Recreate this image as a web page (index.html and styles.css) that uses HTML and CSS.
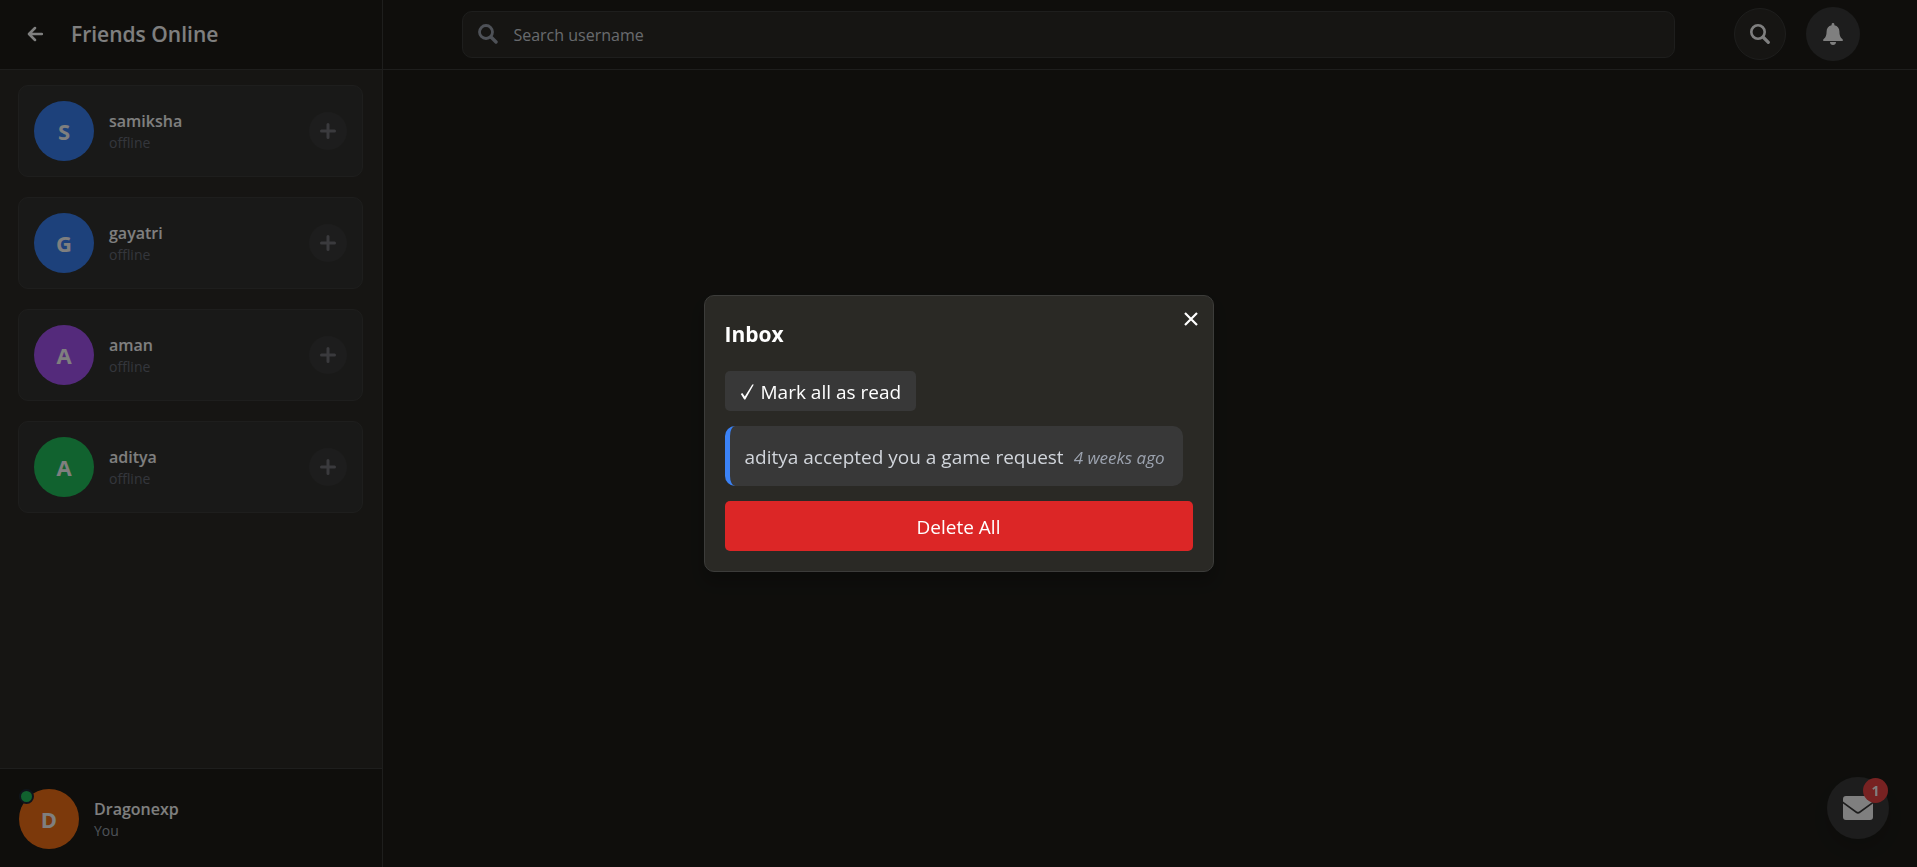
FILE: index.html
```html
<!DOCTYPE html>
<html lang="en">
<head>
<meta charset="utf-8">
<meta name="viewport" content="width=device-width, initial-scale=1">
<title>Friends Online</title>
<link rel="stylesheet" href="styles.css">
</head>
<body>
<div class="app">
  <aside class="sidebar">
    <header class="sidebar-head">
      <button class="back" type="button" aria-label="Back">
        <svg viewBox="0 0 16 16" width="16" height="16"><path d="M8 2 2 8l6 6M2.400 8H15" fill="none" stroke="currentColor" stroke-width="2.500" stroke-linecap="round" stroke-linejoin="round"/></svg>
      </button>
      <h1 class="title">Friends Online</h1>
    </header>
    <ul class="friends">
      <li class="card">
        <span class="avatar blue">S</span>
        <div class="who"><span class="name">samiksha</span><span class="status">offline</span></div>
        <button class="add" type="button" aria-label="Add samiksha"><svg viewBox="0 0 16 16" width="16" height="16"><path d="M8 1.500v13M1.500 8h13" stroke="currentColor" stroke-width="3" stroke-linecap="round"/></svg></button>
      </li>
      <li class="card">
        <span class="avatar blue">G</span>
        <div class="who"><span class="name">gayatri</span><span class="status">offline</span></div>
        <button class="add" type="button" aria-label="Add gayatri"><svg viewBox="0 0 16 16" width="16" height="16"><path d="M8 1.500v13M1.500 8h13" stroke="currentColor" stroke-width="3" stroke-linecap="round"/></svg></button>
      </li>
      <li class="card">
        <span class="avatar purple">A</span>
        <div class="who"><span class="name">aman</span><span class="status">offline</span></div>
        <button class="add" type="button" aria-label="Add aman"><svg viewBox="0 0 16 16" width="16" height="16"><path d="M8 1.500v13M1.500 8h13" stroke="currentColor" stroke-width="3" stroke-linecap="round"/></svg></button>
      </li>
      <li class="card">
        <span class="avatar green">A</span>
        <div class="who"><span class="name">aditya</span><span class="status">offline</span></div>
        <button class="add" type="button" aria-label="Add aditya"><svg viewBox="0 0 16 16" width="16" height="16"><path d="M8 1.500v13M1.500 8h13" stroke="currentColor" stroke-width="3" stroke-linecap="round"/></svg></button>
      </li>
    </ul>
    <footer class="me">
      <span class="avatar orange">D<i class="dot"></i></span>
      <div class="who"><span class="name">Dragonexp</span><span class="status you">You</span></div>
    </footer>
  </aside>
  <main class="main">
    <header class="topbar">
      <label class="search">
        <svg viewBox="0 0 20 20" width="20" height="20"><circle cx="8" cy="8" r="6.500" fill="none" stroke="currentColor" stroke-width="2.800"/><path d="m13 13 5 5" stroke="currentColor" stroke-width="3.400" stroke-linecap="round"/></svg>
        <input type="text" placeholder="Search username" aria-label="Search username">
      </label>
      <div class="actions">
        <button class="round outlined" type="button" aria-label="Search">
          <svg viewBox="0 0 20 20" width="20" height="20"><circle cx="8" cy="8" r="6.700" fill="none" stroke="currentColor" stroke-width="2.600"/><path d="m13.500 13.500 4.800 4.800" stroke="currentColor" stroke-width="3.200" stroke-linecap="round"/></svg>
        </button>
        <button class="round bell" type="button" aria-label="Notifications">
          <svg viewBox="0 0 20 22" width="20" height="22"><path d="M10 0a1.400 1.400 0 0 1 1.400 1.400v.8c3.200.7 5 3 5 6.200 0 4 .8 5.700 2.900 7.600.5.500.7.900.7 1.300 0 .500-.4.700-1 .7H1c-.6 0-1-.2-1-.7 0-.4.200-.8.700-1.300 2.100-1.900 2.900-3.600 2.900-7.600 0-3.200 1.800-5.500 5-6.200v-.8A1.400 1.400 0 0 1 10 0ZM7 19h6c0 1.800-1.300 3-3 3s-3-1.200-3-3Z" fill="currentColor"/></svg>
        </button>
      </div>
    </header>
    <button class="mail" type="button" aria-label="Inbox, 1 unread">
      <svg viewBox="0 0 30 24" width="30" height="24"><path d="M3 0h24a3 3 0 0 1 3 3v2.500L16.500 15.200a2.600 2.600 0 0 1-3 0L0 5.500V3a3 3 0 0 1 3-3ZM0 7.600l12.600 9.200a4 4 0 0 0 4.800 0L30 7.600v13.400a3 3 0 0 1-3 3H3a3 3 0 0 1-3-3Z" fill="currentColor"/></svg>
      <span class="badge">1</span>
    </button>
  </main>
</div>
<div class="overlay">
  <section class="modal" role="dialog" aria-modal="true" aria-labelledby="inbox-title">
    <button class="close" type="button" aria-label="Close"><svg viewBox="0 0 14 14" width="14" height="14"><path d="m1 1 12 12M13 1 1 13" stroke="currentColor" stroke-width="2.200"/></svg></button>
    <h2 class="modal-title" id="inbox-title">Inbox</h2>
    <button class="mark" type="button"><svg viewBox="0 0 14 16" width="14" height="16"><path d="m.8 10 1.500-.9 2.500 3.500L12.300.5h1.500L5.300 15.500H4.200Z" fill="currentColor"/></svg>Mark all as read</button>
    <ul class="messages">
      <li class="message"><span>aditya accepted you a game request</span><time class="ago">4 weeks ago</time></li>
    </ul>
    <button class="delete" type="button">Delete All</button>
  </section>
</div>
</body>
</html>
```
FILE: styles.css
```css
* { box-sizing: border-box; }
body {
  margin: 0;
  background: #1e1d19;
  color: #fff;
  font-family: "Segoe UI", "Open Sans", "Noto Sans", sans-serif;
  font-size: 19px;
}
button { border: 0; padding: 0; color: inherit; font: inherit; cursor: pointer; }
ul { list-style: none; margin: 0; padding: 0; }
svg { display: block; flex: none; }

.app { display: flex; min-height: 100vh; }
.sidebar {
  display: flex;
  flex-direction: column;
  flex: none;
  width: 20%;
  background: #2c2a26;
  border-right: 1px solid #3c3c3a;
}
.sidebar-head {
  display: flex;
  align-items: center;
  gap: 28px;
  height: 70px;
  padding: 0 27px 1px;
  background: #1e1d19;
  border-bottom: 1px solid #3c3c3a;
}
.back { background: none; }
.title { margin: 0; font-size: 21px; font-weight: 600; }
.friends {
  display: flex;
  flex-direction: column;
  flex: 1;
  gap: 20px;
  padding: 15px 19px 15px 18px;
}
.card {
  display: flex;
  align-items: center;
  gap: 15px;
  padding: 15px;
  background: #333330;
  border: 1px solid #3c3c3a;
  border-radius: 10px;
}
.avatar {
  position: relative;
  display: grid;
  place-items: center;
  flex: none;
  width: 60px;
  height: 60px;
  border-radius: 50%;
  font-size: 22px;
  line-height: 30px;
  font-weight: 700;
}
.blue { background: #3b82f6; }
.purple { background: #a855f7; }
.green { background: #22c55e; }
.orange { background: #f97316; }
.who { display: flex; flex-direction: column; flex: 1; }
.name { font-size: 16px; line-height: 24px; font-weight: 600; }
.status { font-size: 14px; line-height: 20px; color: #686d79; }
.you { color: #9ca3af; }
.add {
  display: grid;
  place-items: center;
  width: 38px;
  height: 38px;
  border-radius: 50%;
  background: #3a3a3a;
  color: #74747a;
}
.me {
  display: flex;
  align-items: center;
  gap: 15px;
  padding: 20px 19px 18px;
  background: #1e1d19;
  border-top: 1px solid #3c3c3a;
}
.dot {
  position: absolute;
  top: 0;
  left: 0;
  width: 15px;
  height: 15px;
  border: 2px solid #1f2937;
  border-radius: 50%;
  background: #22c55e;
}

.main { flex: 1; }
.topbar {
  display: flex;
  align-items: center;
  gap: 59px;
  height: 70px;
  padding: 0 57px 1px 79px;
  border-bottom: 1px solid #3c3c3a;
}
.search {
  display: flex;
  align-items: center;
  flex: 1;
  gap: 15px;
  height: 47px;
  padding: 0 15px;
  background: #2c2a26;
  border: 1px solid #3c3c3a;
  border-radius: 10px;
  color: #9ca3af;
}
.search input {
  flex: 1;
  border: 0;
  padding: 2px 0 0;
  outline: 0;
  background: none;
  color: #fff;
  font: inherit;
  font-size: 16px;
}
.search input::placeholder { color: #d1d5db; opacity: 1; }
.actions { display: flex; align-items: center; gap: 20px; }
.round { display: grid; place-items: center; border-radius: 50%; }
.outlined { width: 52px; height: 52px; background: #2c2a26; border: 1px solid #3c3c3a; }
.bell { width: 54px; height: 54px; background: #3a3a3a; }
.mail {
  position: fixed;
  right: 28px;
  bottom: 28px;
  display: grid;
  place-items: center;
  width: 62px;
  height: 62px;
  border-radius: 50%;
  background: #3a3a3a;
  box-shadow: 0 10px 15px rgba(0, 0, 0, .1);
}
.badge {
  position: absolute;
  top: 1px;
  right: 1px;
  display: grid;
  place-items: center;
  width: 25px;
  height: 25px;
  border-radius: 50%;
  background: #ef4444;
  font-size: 14px;
  font-weight: 700;
}

.overlay {
  position: fixed;
  inset: 0;
  display: grid;
  place-items: center;
  background: rgba(0, 0, 0, .5);
}
.modal {
  position: relative;
  display: flex;
  flex-direction: column;
  align-items: flex-start;
  gap: 15px;
  width: 510px;
  padding: 20px;
  background: #2a2925;
  border: 1px solid #3c3c3a;
  border-radius: 10px;
  box-shadow: 0 10px 15px rgba(0, 0, 0, .2);
}
.close { position: absolute; top: 16px; right: 15px; background: none; }
.modal-title { margin: 0; padding-bottom: 4px; font-size: 21px; line-height: 36px; font-weight: 700; }
.mark {
  display: flex;
  align-items: center;
  gap: 7px;
  height: 40px;
  padding: 2px 15px 0;
  background: #383838;
  border-radius: 5px;
}
.messages { align-self: stretch; padding-right: 10px; }
.message {
  display: flex;
  align-items: center;
  gap: 10px;
  height: 60px;
  padding: 2px 15px 0;
  background: #383838;
  border-left: 5px solid #3b82f6;
  border-radius: 10px;
  color: #d1d5db;
  white-space: nowrap;
}
.ago { color: #9ca3af; font-size: 17px; font-style: italic; }
.delete {
  align-self: stretch;
  height: 50px;
  padding-top: 2px;
  background: #dc2626;
  border-radius: 5px;
}
```
